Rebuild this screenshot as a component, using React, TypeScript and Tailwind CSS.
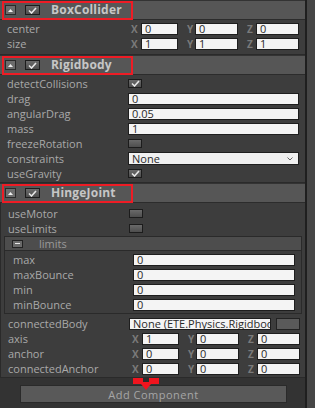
import React from 'react';

const FONT = { fontFamily: '"Open Sans", "Noto Sans", sans-serif' };

const Check: React.FC<{ on?: boolean; big?: boolean }> = ({ on, big }) => (
  <div className={`${big ? 'w-[15px] h-[10px]' : 'w-[14px] h-[9px]'} border border-[#1c1c1c] bg-gradient-to-b from-[#6a6a6a] to-[#4e4e4e] flex items-center justify-center shrink-0`}>
    {on && (
      <svg width="9" height="7" viewBox="0 0 9 7">
        <path d="M1 3.5 L3.5 6 L8 1" fill="none" stroke="#e6e6e6" strokeWidth="1.6" />
      </svg>
    )}
  </div>
);

const Field: React.FC<{ value?: string; className?: string }> = ({ value = '0', className = '' }) => (
  <div className={`h-[12px] bg-[#f4f4f4] border border-[#1e1e1e] text-[#2a2a2a] text-[11px] leading-none pl-[3px] flex items-center overflow-hidden whitespace-nowrap ${className}`}>
    {value}
  </div>
);

const Vec: React.FC<{ x: string; y: string; z: string }> = ({ x, y, z }) => (
  <div className="flex items-center w-[171px]">
    <span className="w-[13px] pl-[3px] text-[#7a7a7a] text-[10px] font-bold leading-none">X</span>
    <Field value={x} className="w-[37px]" />
    <span className="w-[17px] pl-[9px] text-[#7a7a7a] text-[10px] font-bold leading-none">Y</span>
    <Field value={y} className="w-[43px]" />
    <span className="w-[18px] pl-[9px] text-[#7a7a7a] text-[10px] font-bold leading-none">Z</span>
    <Field value={z} className="w-[43px]" />
  </div>
);

const Row: React.FC<{ label: string; children?: React.ReactNode; sub?: boolean }> = ({ label, children, sub }) => (
  <div className="h-[15px] flex items-center">
    <div className={`${sub ? 'w-[128px] pl-[8px]' : 'w-[128px] pl-[7px]'} text-[#a9a9a9] text-[11px] leading-none whitespace-nowrap`}>
      {label}
    </div>
    {children}
  </div>
);

const Header: React.FC<{ title: string }> = ({ title }) => (
  <div className="h-[19px] bg-[#565656] border-b border-[#2c2c2c] flex items-center">
    <div className="ml-[2px] w-[131px] h-[19px] border-2 border-[#ee1c25] flex items-center">
      <div className="ml-[1px] w-[11px] h-[10px] bg-[#6c6c6c] border border-[#2a2a2a] flex items-center justify-center">
        <svg width="5" height="3" viewBox="0 0 5 3"><path d="M0 3 L2.5 0 L5 3 Z" fill="#f0f0f0" /></svg>
      </div>
      <div className="ml-[9px]"><Check on big /></div>
      <span className="ml-[11px] text-[#c6c6c6] text-[12px] font-bold leading-none tracking-[0.2px]">{title}</span>
    </div>
  </div>
);

export default function App() {
  return (
    <div style={FONT} className="w-[315px] h-[408px] bg-[#333333] flex overflow-hidden">
      <div className="w-[305px] flex flex-col pt-[1px]">
        {/* BoxCollider */}
        <Header title="BoxCollider" />
        <div className="bg-[#3d3d3d] pt-[1px] pb-[3px] border-b border-[#2a2a2a]">
          <Row label="center"><Vec x="0" y="0" z="0" /></Row>
          <Row label="size"><Vec x="1" y="1" z="1" /></Row>
        </div>

        {/* Rigidbody */}
        <div className="mt-[1px]">
          <Header title="Rigidbody" />
        </div>
        <div className="bg-[#3d3d3d] pt-[1px] pb-[1px] border-b border-[#2a2a2a]">
          <Row label="detectCollisions"><Check on /></Row>
          <Row label="drag"><Field value="0" className="w-[171px]" /></Row>
          <Row label="angularDrag"><Field value="0.05" className="w-[171px]" /></Row>
          <Row label="mass"><Field value="1" className="w-[171px]" /></Row>
          <Row label="freezeRotation"><Check /></Row>
          <Row label="constraints">
            <div className="w-[171px] h-[13px] bg-[#f0f0f0] border border-[#1e1e1e] text-[#2a2a2a] text-[11px] leading-none pl-[3px] pr-[5px] flex items-center justify-between">
              <span>None</span>
              <svg width="6" height="4" viewBox="0 0 6 4"><path d="M0.5 0.5 L3 3 L5.5 0.5" fill="none" stroke="#666" strokeWidth="1" /></svg>
            </div>
          </Row>
          <Row label="useGravity"><Check on /></Row>
        </div>

        {/* HingeJoint */}
        <div className="mt-[1px]">
          <Header title="HingeJoint" />
        </div>
        <div className="bg-[#3d3d3d] pt-[3px] pb-[1px] border-l border-b border-[#2a2a2a]">
          <Row label="useMotor"><Check /></Row>
          <Row label="useLimits"><Check /></Row>
          <div className="ml-[3px] mr-[3px] border border-[#2a2a2a]">
            <div className="h-[14px] bg-[#4d4d4d] border-b border-[#2a2a2a] flex items-center">
              <div className="ml-[7px] w-[11px] h-[8px] bg-[#6a6a6a] border border-[#222] flex items-center justify-center">
                <div className="w-[5px] h-[1px] bg-[#e8e8e8]" />
              </div>
              <span className="ml-[16px] text-[#9a9a9a] text-[11px] leading-none">limits</span>
            </div>
            <div className="pt-[1px] pb-[1px]">
              <Row label="max" sub><Field value="0" className="w-[162px]" /></Row>
              <Row label="maxBounce" sub><Field value="0" className="w-[162px]" /></Row>
              <Row label="min" sub><Field value="0" className="w-[162px]" /></Row>
              <Row label="minBounce" sub><Field value="0" className="w-[162px]" /></Row>
            </div>
          </div>
          <div className="mt-[2px]">
            <Row label="connectedBody">
              <Field value="None (ETE.Physics.Rigidbody)" className="w-[142px]" />
              <div className="ml-[5px] w-[24px] h-[12px] bg-[#5a5a5a] border border-[#222]" />
            </Row>
          </div>
          <Row label="axis"><Vec x="1" y="0" z="0" /></Row>
          <Row label="anchor"><Vec x="0" y="0" z="0" /></Row>
          <Row label="connectedAnchor"><Vec x="0" y="0" z="0" /></Row>
        </div>

        {/* Add Component */}
        <div className="relative mt-[7px] ml-[20px] w-[267px]">
          <div className="h-[18px] bg-[#595959] border border-[#2a2a2a] flex items-center justify-center text-[#a6a6a6] text-[11px] leading-none tracking-[0.5px]">
            Add Component
          </div>
          <svg className="absolute left-[113px] top-[-7px]" width="26" height="13" viewBox="0 0 26 13">
            <path d="M0 0 H26 V6 H18 L13 12 L8 6 H0 Z" fill="#f0141e" />
            <rect x="10" y="0" width="6" height="4" fill="#2a2a2a" />
          </svg>
        </div>
      </div>
      <div className="w-[2px] bg-[#1f1f1f]" />
      <div className="w-[8px] bg-[#464646]" />
    </div>
  );
}
